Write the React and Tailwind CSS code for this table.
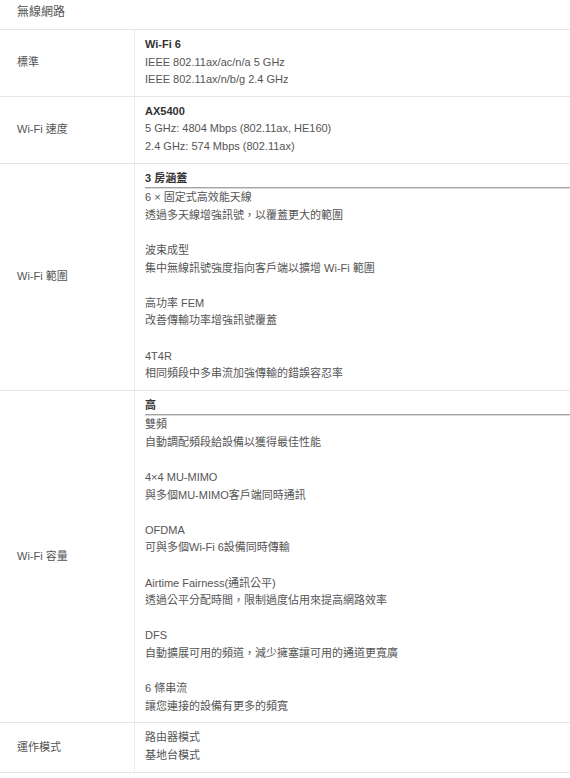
const font = {
  fontFamily: '"Liberation Sans", "Noto Sans CJK TC", Arial, sans-serif',
};

const rows = [
  {
    label: "標準",
    title: "Wi-Fi 6",
    lines: ["IEEE 802.11ax/ac/n/a 5 GHz", "IEEE 802.11ax/n/b/g 2.4 GHz"],
  },
  {
    label: "Wi-Fi 速度",
    title: "AX5400",
    lines: ["5 GHz: 4804 Mbps (802.11ax, HE160)", "2.4 GHz: 574 Mbps (802.11ax)"],
  },
  {
    label: "Wi-Fi 範圍",
    title: "3 房涵蓋",
    rule: true,
    groups: [
      ["6 × 固定式高效能天線", "透過多天線增強訊號，以覆蓋更大的範圍"],
      ["波束成型", "集中無線訊號強度指向客戶端以擴增 Wi-Fi 範圍"],
      ["高功率 FEM", "改善傳輸功率增強訊號覆蓋"],
      ["4T4R", "相同頻段中多串流加強傳輸的錯誤容忍率"],
    ],
  },
  {
    label: "Wi-Fi 容量",
    title: "高",
    rule: true,
    groups: [
      ["雙頻", "自動調配頻段給設備以獲得最佳性能"],
      ["4×4 MU-MIMO", "與多個MU-MIMO客戶端同時通訊"],
      ["OFDMA", "可與多個Wi-Fi 6設備同時傳輸"],
      ["Airtime Fairness(通訊公平)", "透過公平分配時間，限制過度佔用來提高網路效率"],
      ["DFS", "自動擴展可用的頻道，減少擁塞讓可用的通道更寬廣"],
      ["6 條串流", "讓您連接的設備有更多的頻寬"],
    ],
  },
  {
    label: "運作模式",
    lines: ["路由器模式", "基地台模式"],
  },
];

function Value({ row }) {
  return (
    <div className="pl-[10px] pt-[6px] pb-[7px]">
      {row.title && (
        <div className="font-bold text-[#333]">{row.title}</div>
      )}
      {row.rule && (
        <div className="h-[2px] border-t border-b border-t-[#a3a3a3] border-b-[#dadada]" />
      )}
      {row.lines &&
        row.lines.map((l) => <div key={l}>{l}</div>)}
      {row.groups &&
        row.groups.map((g, i) => (
          <div key={i}>
            {i > 0 && <div className="h-[17.6px]" />}
            {g.map((l) => (
              <div key={l}>{l}</div>
            ))}
          </div>
        ))}
    </div>
  );
}

export default function App() {
  return (
    <div
      style={font}
      className="w-[570px] min-h-[778px] bg-white text-[11px] leading-[17.6px] text-[#555]"
    >
      <div className="h-[30px] pt-[4px] pl-[17px] border-b border-[#e6e6e6] text-[12px] leading-[17px] text-[#555]">
        無線網路
      </div>
      {rows.map((row) => (
        <div
          key={row.label}
          className="grid grid-cols-[135px_1fr] border-b border-[#e6e6e6]"
        >
          <div className="flex items-center pl-[17px] border-r border-[#ececec]">
            {row.label}
          </div>
          <Value row={row} />
        </div>
      ))}
    </div>
  );
}
